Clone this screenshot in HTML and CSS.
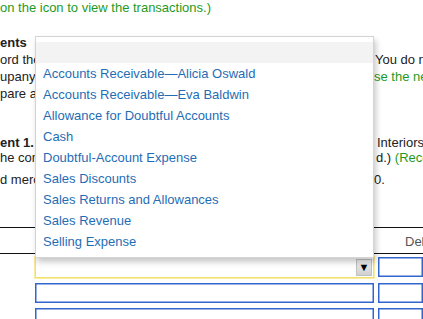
FILE: index.html
```html
<!DOCTYPE html>
<html>
<head>
    <link rel="stylesheet" href="styles.css">
</head>
<body>
    <div class="page">
        <p class="note">on the icon to view the transactions.)</p>

        <div class="line title"><span class="left">ents</span><span class="right"></span></div>
        <div class="line tall"><span class="left">ord the transactions on the books of the company</span><span class="right r1">You do not need to record the entries</span></div>
        <div class="line tall"><span class="left">upany with the following accounts.</span><span class="right r0 green">se the new accounts as needed.)</span></div>
        <div class="line tall"><span class="left">pare a list of the accounts.</span><span class="right"></span></div>

        <div class="line req"><span class="left bold">ent 1. Journalize the transactions for Interiors</span><span class="right r3">Interiors</span></div>
        <div class="line short"><span class="left">he company for the year ended.</span><span class="right r2">d.) <span class="green">(Record debits first)</span></span></div>
        <div class="line short gap"><span class="left">d merchandise on account totaling 0.</span><span class="right r0">0.</span></div>

        <div class="table">
            <div class="head">
                <div></div>
                <div></div>
                <div class="col-title">Debit</div>
            </div>
            <div class="row first">
                <div></div>
                <div class="select"><span class="arrow">&#9660;</span></div>
                <div class="input"></div>
            </div>
            <div class="row">
                <div></div>
                <div class="input"></div>
                <div class="input"></div>
            </div>
            <div class="row">
                <div></div>
                <div class="input"></div>
                <div class="input"></div>
            </div>
        </div>
    </div>

    <div class="dropdown">
        <div class="option blank"></div>
        <div class="option">Accounts Receivable&mdash;Alicia Oswald</div>
        <div class="option">Accounts Receivable&mdash;Eva Baldwin</div>
        <div class="option">Allowance for Doubtful Accounts</div>
        <div class="option">Cash</div>
        <div class="option">Doubtful-Account Expense</div>
        <div class="option">Sales Discounts</div>
        <div class="option">Sales Returns and Allowances</div>
        <div class="option">Sales Revenue</div>
        <div class="option">Selling Expense</div>
    </div>
</body>
</html>
```

FILE: styles.css
```css
* {
    box-sizing: border-box;
}

body {
    margin: 0;
    font-family: "Liberation Sans", Arial, sans-serif;
    font-size: 13px;
    color: #222;
    background: #fff;
    overflow: hidden;
    height: 319px;
    position: relative;
}

.note {
    margin: 0;
    line-height: 16px;
    color: #1f9a1f;
    white-space: nowrap;
}

.green {
    color: #1f9a1f;
}

.bold {
    font-weight: bold;
}

.line {
    display: grid;
    grid-template-columns: 374px 1fr;
    white-space: nowrap;
}

.line .left,
.line .right {
    overflow: hidden;
}

.title {
    margin-top: 18px;
    line-height: 17px;
    font-weight: bold;
}

.tall {
    line-height: 17px;
}

.req {
    margin-top: 33px;
    line-height: 15px;
}

.short {
    line-height: 15px;
}

.gap {
    margin-top: 7px;
}

.r0 { padding-left: 0; }
.r1 { padding-left: 1px; }
.r2 { padding-left: 2px; }
.r3 { padding-left: 3px; }

.table {
    margin-top: 40px;
}

.head {
    display: grid;
    grid-template-columns: 35px 339px 1fr;
    border-top: 1px solid #111;
    border-bottom: 1px solid #111;
    padding: 5px 0 3px;
    line-height: 17px;
}

.col-title {
    color: #555;
    padding-left: 31px;
    white-space: nowrap;
}

.row {
    display: grid;
    grid-template-columns: 35px 339px 1fr;
    margin-top: 5px;
}

.row.first {
    margin-top: 3px;
}

.row .input:last-child {
    margin-left: 4px;
}

.input {
    height: 20px;
    border: 1px solid #3366cc;
    box-shadow: inset 0 0 0 0.5px #3366cc;
    background: #fff;
}

.select {
    height: 21px;
    border: 1px solid #f2df72;
    box-shadow: 0 0 0 1px #fbec9e;
    background: #fff;
    display: flex;
    justify-content: flex-end;
    align-items: flex-end;
    padding: 1px;
}

.arrow {
    width: 16px;
    height: 17px;
    background: linear-gradient(#f0f0f0, #d0d0d0);
    border: 1px solid #c2c2c2;
    font-size: 11px;
    line-height: 15px;
    text-align: center;
    color: #000;
}

.dropdown {
    position: absolute;
    left: 35px;
    top: 36px;
    width: 339px;
    border: 1px solid #d4d4d4;
    background: #fff;
    padding: 5px 0;
    box-shadow: 2px 4px 6px rgba(0, 0, 0, 0.22);
    z-index: 2;
}

.option {
    height: 21px;
    line-height: 21px;
    padding-left: 7px;
    color: #1f6db5;
    white-space: nowrap;
}

.option.blank {
    background: #f3f3f3;
}
```
